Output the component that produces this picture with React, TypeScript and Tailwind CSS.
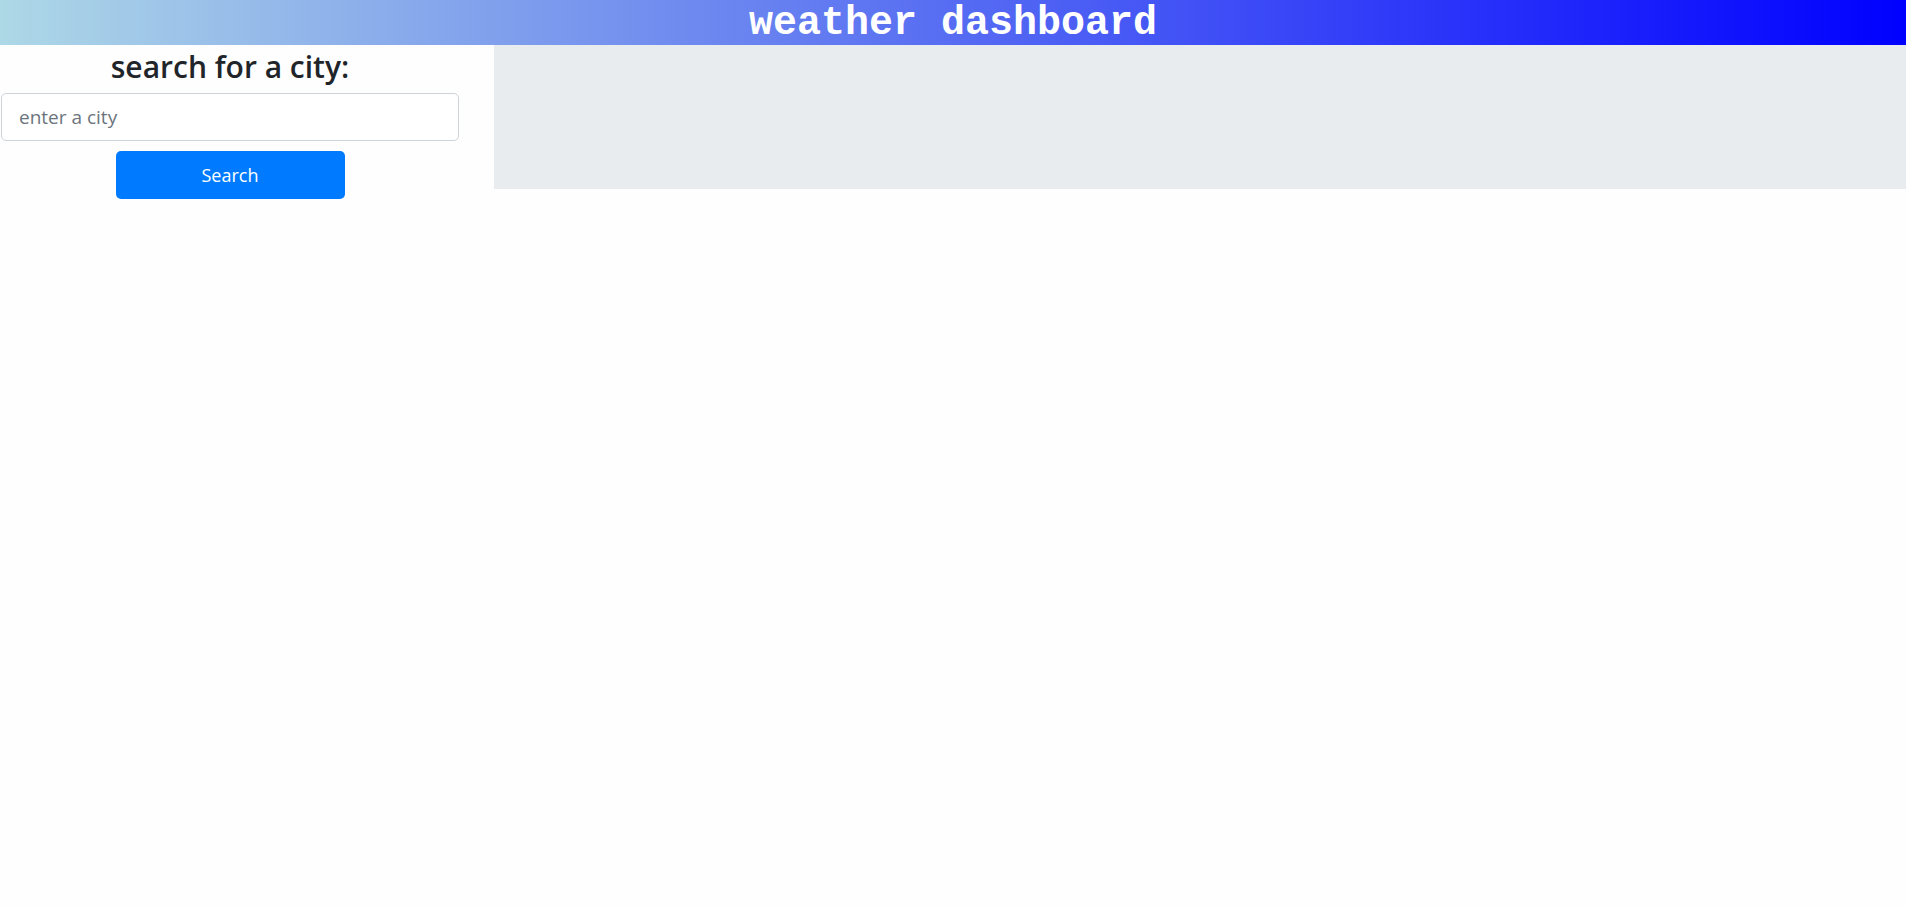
export default function App() {
  return (
    <div className="min-h-[906px] bg-[#fefefe] font-['Open_Sans',sans-serif] text-[#212529]">
      <header className="h-[45px] bg-[linear-gradient(to_right,#add8e6,#0000ff)] flex items-center justify-center pt-[3px]">
        <h1 className="font-['Liberation_Mono',monospace] font-bold text-[40px] leading-none text-white">
          weather dashboard
        </h1>
      </header>
      <div className="flex">
        <aside className="w-[494px] shrink-0">
          <div className="w-[460px] flex flex-col items-center">
            <h3 className="text-[30px] font-semibold leading-[1.2] mt-[4px] mb-[8px]">
              search for a city:
            </h3>
            <input
              type="text"
              placeholder="enter a city"
              className="w-[458px] h-[48px] px-[17px] text-[19px] border border-[#ced4da] rounded-[5px] bg-white placeholder:text-[#6c757d] outline-none"
            />
            <button className="mt-[10px] w-[229px] h-[48px] bg-[#007bff] text-white text-[18px] rounded-[5px]">
              Search
            </button>
          </div>
        </aside>
        <main className="flex-1 h-[144px] bg-[#e9ecef]"></main>
      </div>
    </div>
  );
}
